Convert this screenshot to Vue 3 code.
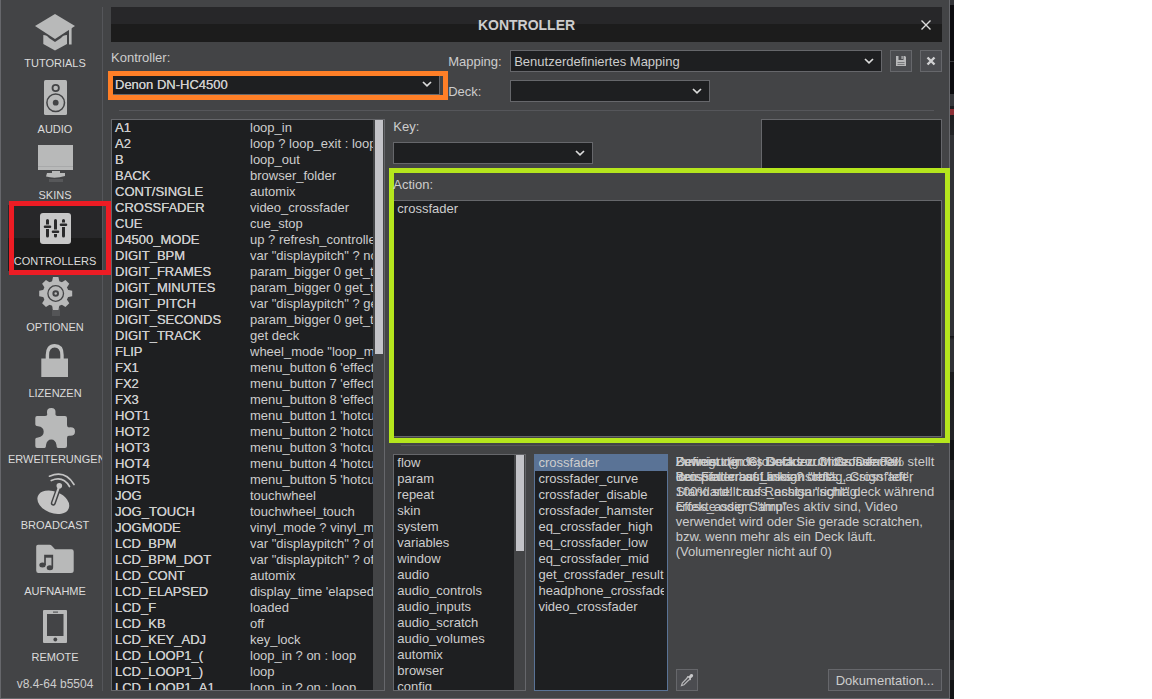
<template>
  <div class="desktop">
    <div class="window">
      <!-- Sidebar -->
      <nav class="sidebar">
        <button
          v-for="item in navItems"
          :key="item.id"
          :class="{ active: activeNav === item.id }"
          class="nav-item"
          @click="activeNav = item.id"
        >
          <svg class="nav-icon" viewBox="0 0 60 49" aria-hidden="true">
            <g v-if="item.id === 'tutorials'">
              <path d="M30 7 50 19 30 32 10 19Z" />
              <path d="M18.3 28 Q22 28 24 31 L30 35 36 31 Q38 28 42 28 V37 L30 43.5 18.3 37Z" />
              <rect x="44" y="21" width="2.6" height="16.5" />
            </g>
            <g v-else-if="item.id === 'audio'">
              <rect x="19" y="7" width="23" height="35" rx="1.5" />
              <circle class="line" cx="30.7" cy="15" r="3.2" stroke-width="1.8" />
              <circle class="line" cx="30.7" cy="29.7" r="8.8" stroke-width="1.5" />
              <circle class="dark" cx="30.7" cy="29.7" r="2.9" />
            </g>
            <g v-else-if="item.id === 'skins'">
              <rect x="13" y="6" width="35" height="25" />
              <rect x="13" y="27" width="35" height="1" fill="#a8a9aa" />
              <path d="M27 32 H35 V34 H40 V37 Q30 40 21 37.5 L22 34 H27Z" />
              <rect x="24" y="40" width="14" height="3" opacity="0.18" />
            </g>
            <g v-else-if="item.id === 'controllers'">
              <rect x="15" y="8" width="31" height="31" rx="3" fill="#c8c8c8" />
              <path class="line" d="M22.5 15.5 V31 M30.5 15.5 V31 M38.5 15.5 V31" stroke-width="3" stroke-linecap="round" />
              <path d="M18.5 21.8 H26.5 M26.5 26.8 H34.5 M34.5 19.8 H42.5" stroke="#c8c8c8" stroke-width="4.6" />
              <path class="line" d="M20 21.8 H25 M28 26.8 H33 M36 19.8 H41" stroke-width="2.6" stroke-linecap="round" />
            </g>
            <g v-else-if="item.id === 'optionen'">
              <rect x="27" y="37" width="8" height="8" opacity="0.15" />
              <circle cx="30.7" cy="22.5" r="12.8" />
              <path
                v-for="n in 8"
                :key="n"
                d="M26.7 12 L28 6 H33.4 L34.7 12Z"
                :transform="`rotate(${n * 45} 30.7 22.5)`"
              />
              <circle class="line" cx="30.7" cy="22.5" r="7.8" stroke-width="1.3" />
              <circle class="line" cx="30.7" cy="22.5" r="2.3" stroke-width="2" />
            </g>
            <g v-else-if="item.id === 'lizenzen'">
              <rect x="16.3" y="21.5" width="26.7" height="18.5" />
              <path d="M22.4 22 V18 Q22.4 8.8 29.7 8.8 Q37 8.8 37 18 V22" fill="none" stroke="#bfc0c0" stroke-width="3.4" />
            </g>
            <g v-else-if="item.id === 'erweiterungen'">
              <path
                d="M12 13 H20 Q23 13 22 10 Q21.5 5 26.3 5 Q31 5 30.5 10 Q30 13 32.5 13 H40 Q42 13 42 15 V22 Q42 25 45 24.3 Q50 24 50 28.5 Q50 33 45 32.8 Q42 32 42 35 V43 Q42 45 40 45 H33 Q31.5 45 31.5 42 Q30.5 36.5 26.3 36.5 Q22 36.5 21 42 Q21 45 19.5 45 H12 Q10.3 45 10.3 43 V36 Q10.3 34.5 13 34.5 Q18.7 33.5 18.7 28.8 Q18.7 24 13 23.3 Q10.3 23.3 10.3 21.5 V15 Q10.3 13 12 13Z"
              />
            </g>
            <g v-else-if="item.id === 'broadcast'">
              <ellipse cx="28.3" cy="33.2" rx="16.6" ry="10.8" transform="rotate(22 28.3 33.2)" fill="#c4c4c4" />
              <path class="line" d="M28.3 34.2 L33.5 19.5" stroke-width="5" stroke-linecap="round" />
              <path d="M28.3 34 L34.3 17" stroke="#c4c4c4" stroke-width="2.2" stroke-linecap="round" />
              <circle cx="34.3" cy="16.7" r="2.8" fill="#c4c4c4" />
              <path d="M24.5 7.2 Q40 0.5 49 15.5 M26.3 11.5 Q38 6.5 44.5 17.5" fill="none" stroke="#c4c4c4" stroke-width="1.7" stroke-linecap="round" />
            </g>
            <g v-else-if="item.id === 'aufnahme'">
              <path d="M13 9.7 H24.5 Q26 9.7 27 11 L30 14.3 H46.5 Q48.7 14.3 48.7 16.5 V35.5 Q48.7 38 46 38 H13.5 Q11.2 38 11.2 35.5 V11.5 Q11.2 9.7 13 9.7Z" />
              <path class="line" d="M20 30 V20.5 H27.3 V32.5" stroke-width="1.7" />
              <path class="line" d="M20 21.5 H27.3" stroke-width="2.4" />
              <ellipse class="dark" cx="17.5" cy="30" rx="3.2" ry="2.5" />
              <ellipse class="dark" cx="24.9" cy="32.7" rx="3.2" ry="2.5" />
            </g>
            <g v-else>
              <rect x="18" y="9" width="24" height="33" rx="1" />
              <rect class="dark" x="22" y="13" width="16.5" height="22" />
              <rect class="dark" x="28" y="10.6" width="5" height="1" />
              <circle class="dark" cx="30.3" cy="38.5" r="1.9" />
            </g>
          </svg>
          <span class="nav-label">{{ item.label }}</span>
          <span v-if="item.id === 'controllers'" class="marker marker-red"></span>
        </button>
        <div class="version">v8.4-64 b5504</div>
      </nav>

      <!-- Main panel -->
      <main class="panel">
        <header class="title-bar">
          <h1 class="title">KONTROLLER</h1>
          <button class="close-button" aria-label="Schließen">
            <svg viewBox="0 0 12 12"><path d="M1.5 1.5 10.5 10.5 M10.5 1.5 1.5 10.5" stroke-width="1.4" /></svg>
          </button>
        </header>

        <section class="selectors">
          <div class="field">
            <label for="controller">Kontroller:</label>
            <div class="combo marked">
              <select id="controller" class="strong">
                <option>Denon DN-HC4500</option>
              </select>
              <svg class="chevron" viewBox="0 0 10 6"><path d="M1 1 5 4.8 9 1" /></svg>
              <span class="marker marker-orange"></span>
            </div>
          </div>
          <div class="mapping">
            <div class="mapping-row">
              <label for="mapping">Mapping:</label>
              <div class="combo grow">
                <select id="mapping">
                  <option>Benutzerdefiniertes Mapping</option>
                </select>
                <svg class="chevron" viewBox="0 0 10 6"><path d="M1 1 5 4.8 9 1" /></svg>
              </div>
              <button class="tool-button" aria-label="Speichern">
                <svg viewBox="0 0 12 12">
                  <path d="M1 1 H3.5 V5 H8.5 V1 H10 L11 2 V11 H1Z M6.5 1 H7.7 V4 H6.5Z" fill="#b8b8ba" />
                  <path d="M2.5 7.5 H9.5 M2.5 9.5 H9.5" stroke="#77787b" stroke-width="1" />
                </svg>
              </button>
              <button class="tool-button" aria-label="Löschen">
                <svg viewBox="0 0 12 12"><path d="M2.5 2.5 9.5 9.5 M9.5 2.5 2.5 9.5" stroke="#d0d0d2" stroke-width="2.4" /></svg>
              </button>
            </div>
            <div class="mapping-row">
              <label for="deck">Deck:</label>
              <div class="combo short">
                <select id="deck"></select>
                <svg class="chevron" viewBox="0 0 10 6"><path d="M1 1 5 4.8 9 1" /></svg>
              </div>
            </div>
          </div>
        </section>

        <hr class="divider" />

        <section class="editor">
          <!-- Key bindings -->
          <div class="list-box">
            <div class="list-view">
              <table class="bindings">
                <tbody>
                  <tr v-for="row in bindings" :key="row[0]">
                    <th scope="row">{{ row[0] }}</th>
                    <td>{{ row[1] }}</td>
                  </tr>
                </tbody>
              </table>
            </div>
            <div class="scroll-track">
              <div class="scroll-thumb" :style="{ height: bindingsThumb + '%' }"></div>
            </div>
          </div>

          <div class="details">
            <div class="key-row">
              <div class="field">
                <label for="key">Key:</label>
                <div class="combo short">
                  <select id="key"></select>
                  <svg class="chevron" viewBox="0 0 10 6"><path d="M1 1 5 4.8 9 1" /></svg>
                </div>
              </div>
              <div class="preview"></div>
            </div>

            <div class="action">
              <span class="marker marker-green"></span>
              <label for="action" class="action-label">Action:</label>
              <textarea id="action" v-model="action" spellcheck="false"></textarea>
            </div>

            <hr class="divider" />

            <div class="browser">
              <div class="list-box">
                <ul class="list-view">
                  <li v-for="name in categories" :key="name">
                    <button class="list-item">{{ name }}</button>
                  </li>
                </ul>
                <div class="scroll-track">
                  <div class="scroll-thumb" :style="{ height: categoriesThumb + '%' }"></div>
                </div>
              </div>

              <div class="list-box focused">
                <ul class="list-view">
                  <li v-for="name in verbs" :key="name">
                    <button
                      :class="{ selected: selectedVerb === name }"
                      class="list-item"
                      @click="selectedVerb = name"
                    >
                      {{ name }}
                    </button>
                  </li>
                </ul>
              </div>

              <div class="help">
                <div class="help-texts">
                  <p v-for="(lines, i) in helpTexts" :key="i" class="help-text">
                    <span v-for="(line, j) in lines" :key="j">{{ line }}</span>
                  </p>
                </div>
                <div class="help-actions">
                  <button class="tool-button" aria-label="Farbe wählen">
                    <svg class="picker" viewBox="0 0 14 14">
                      <path d="M8.3 3.5 6.2 6 2.3 10 1.5 12.5 4 11.7 8 7.8 10.5 5.7" fill="none" stroke="#b8b8ba" stroke-width="1.2" />
                      <path d="M7 3 9 3.3 10.5 1.3 Q12 0.5 13 1.8 Q13.5 3 12.5 4 L10.8 5.3 11 7.5Z" fill="#c8c8ca" />
                    </svg>
                  </button>
                  <button class="doc-button">Dokumentation...</button>
                </div>
              </div>
            </div>
          </div>
        </section>
      </main>
    </div>
    <div class="backdrop"></div>
  </div>
</template>

<script setup>
import { ref } from 'vue'

const activeNav = ref('controllers')
const action = ref('crossfader')
const selectedVerb = ref('crossfader')

const bindingsThumb = 41
const categoriesThumb = 41

const navItems = [
  { id: 'tutorials', label: 'TUTORIALS' },
  { id: 'audio', label: 'AUDIO' },
  { id: 'skins', label: 'SKINS' },
  { id: 'controllers', label: 'CONTROLLERS' },
  { id: 'optionen', label: 'OPTIONEN' },
  { id: 'lizenzen', label: 'LIZENZEN' },
  { id: 'erweiterungen', label: 'ERWEITERUNGEN' },
  { id: 'broadcast', label: 'BROADCAST' },
  { id: 'aufnahme', label: 'AUFNAHME' },
  { id: 'remote', label: 'REMOTE' }
]

const bindings = [
  ['A1', 'loop_in'],
  ['A2', 'loop ? loop_exit : loop'],
  ['B', 'loop_out'],
  ['BACK', 'browser_folder'],
  ['CONT/SINGLE', 'automix'],
  ['CROSSFADER', 'video_crossfader'],
  ['CUE', 'cue_stop'],
  ['D4500_MODE', 'up ? refresh_controller'],
  ['DIGIT_BPM', 'var "displaypitch" ? nothing'],
  ['DIGIT_FRAMES', 'param_bigger 0 get_time'],
  ['DIGIT_MINUTES', 'param_bigger 0 get_time'],
  ['DIGIT_PITCH', 'var "displaypitch" ? get_pitch'],
  ['DIGIT_SECONDS', 'param_bigger 0 get_time'],
  ['DIGIT_TRACK', 'get deck'],
  ['FLIP', 'wheel_mode "loop_move"'],
  ['FX1', "menu_button 6 'effect'"],
  ['FX2', "menu_button 7 'effect'"],
  ['FX3', "menu_button 8 'effect'"],
  ['HOT1', "menu_button 1 'hotcue'"],
  ['HOT2', "menu_button 2 'hotcue'"],
  ['HOT3', "menu_button 3 'hotcue'"],
  ['HOT4', "menu_button 4 'hotcue'"],
  ['HOT5', "menu_button 5 'hotcue'"],
  ['JOG', 'touchwheel'],
  ['JOG_TOUCH', 'touchwheel_touch'],
  ['JOGMODE', 'vinyl_mode ? vinyl_mode'],
  ['LCD_BPM', 'var "displaypitch" ? off'],
  ['LCD_BPM_DOT', 'var "displaypitch" ? off'],
  ['LCD_CONT', 'automix'],
  ['LCD_ELAPSED', "display_time 'elapsed'"],
  ['LCD_F', 'loaded'],
  ['LCD_KB', 'off'],
  ['LCD_KEY_ADJ', 'key_lock'],
  ['LCD_LOOP1_(', 'loop_in ? on : loop'],
  ['LCD_LOOP1_)', 'loop'],
  ['LCD_LOOP1_A1', 'loop_in ? on : loop']
]

const categories = [
  'flow',
  'param',
  'repeat',
  'skin',
  'system',
  'variables',
  'window',
  'audio',
  'audio_controls',
  'audio_inputs',
  'audio_scratch',
  'audio_volumes',
  'automix',
  'browser',
  'config'
]

const verbs = [
  'crossfader',
  'crossfader_curve',
  'crossfader_disable',
  'crossfader_hamster',
  'eq_crossfader_high',
  'eq_crossfader_low',
  'eq_crossfader_mid',
  'get_crossfader_result',
  'headphone_crossfader',
  'video_crossfader'
]

// The help pane stacks the texts of several verbs on top of each other
const helpTexts = [
  [
    'Definiert (in %) Deck zur Mitte. Der Fall',
    "'crossfader' auf links ? cross_assign 'left',",
    'Standard: cross_assign "right" deck während',
    'Effekte oder Samples aktiv sind, Video',
    'verwendet wird oder Sie gerade scratchen,',
    'bzw. wenn mehr als ein Deck läuft.',
    '(Volumenregler nicht auf 0)'
  ],
  [
    'Zuweisung des Decks zum Crossfader.',
    'Beispiel: cross_assign "left"',
    '',
    'cross_assign "thru"'
  ],
  [
    'Bewegt den Crossfader. Crossfader 0% stellt',
    'den Fader auf Linksanschlag, Crossfader',
    '100% stellt auf Rechtsanschlag.'
  ]
]
</script>

<style>
body {
  background: #fff;
}
</style>

<style scoped>
.desktop {
  display: flex;
  height: 100vh;
  min-height: 640px;
  padding-right: 198px;
  box-sizing: border-box;
  overflow: hidden;
  font-family: "Liberation Sans", Arial, sans-serif;
  font-size: 13px;
  line-height: 15px;
  color: #cdcdcd;
}

.desktop * {
  box-sizing: border-box;
}

.desktop button,
.desktop select,
.desktop textarea {
  margin: 0;
  font: inherit;
  color: inherit;
}

.window {
  flex: 1;
  min-width: 0;
  display: flex;
  gap: 8px;
  padding: 7px;
  border: 1px solid #66676b;
  border-top: 0;
  background: #434446;
}

.backdrop {
  flex: 0 0 4px;
  background:
    linear-gradient(#333438 5px, transparent 5px),
    linear-gradient(transparent 61px, #37383c 61px, #37383c 62px, transparent 62px),
    linear-gradient(transparent 109px, #8d2f36 109px, #8d2f36 115px, transparent 115px),
    linear-gradient(#0c0c0f 94px, #36373b 94px, #36373b 106px, #1b1c1e 106px, #222326 135px, #303135 135px, #303135 336px, #111214 336px, #303135 340px, #303135 372px, #1b1c1e 372px, #222326 433px, transparent 433px),
    repeating-linear-gradient(#111214 0, #111214 20px, #222326 20px, #222326 40px);
}

/* Sidebar */
.sidebar {
  flex: 0 0 95px;
  min-width: 0;
  display: flex;
  flex-direction: column;
  border-right: 1px solid #55565a;
}

.nav-item {
  position: relative;
  display: block;
  flex: 0 0 66px;
  width: 100%;
  padding: 0;
  border: 0;
  background: none;
  cursor: pointer;
}

.nav-item.active {
  background: linear-gradient(#272729 50%, #1c1c1c 50%);
}

.nav-icon {
  display: block;
  width: 60px;
  height: 49px;
  margin-left: 17px;
  fill: #b8b9b9;
}

.nav-icon .dark {
  fill: #434446;
}

.nav-icon .line {
  fill: none;
  stroke: #434446;
}

.nav-item.active .line {
  stroke: #2a2a2b;
}

.desktop .nav-label {
  display: block;
  height: 17px;
  overflow: hidden;
  font-size: 11px;
  line-height: 14px;
  text-align: center;
  white-space: nowrap;
  color: #dcdcdc;
}

.version {
  margin-top: auto;
  font-size: 12px;
  line-height: 14px;
  text-align: center;
}

/* Coloured frames laid over the controls */
.marker {
  position: absolute;
  border: 5px solid;
  pointer-events: none;
}

.marker-red {
  inset: -4px -9px -4px 1px;
  border-color: #ed1c24;
  z-index: 1;
}

.marker-orange {
  inset: -2px -8px -5px -3px;
  border-color: #ff7f27;
}

.marker-green {
  inset: -9px -8px -6px -4px;
  border-color: #b5e61d;
}

/* Main panel */
.panel {
  flex: 1;
  min-width: 0;
  display: flex;
  flex-direction: column;
}

.title-bar {
  display: grid;
  grid-template-columns: 32px 1fr 32px;
  align-items: center;
  flex: 0 0 35px;
  background: linear-gradient(#272729 50%, #1c1c1c 50%);
}

.title {
  grid-column: 2;
  margin: 0;
  font-size: 14px;
  line-height: 16px;
  font-weight: bold;
  text-align: center;
}

.close-button {
  padding: 0;
  border: 0;
  background: none;
}

.close-button svg {
  display: block;
  width: 12px;
  height: 12px;
  margin: 0 auto;
  stroke: #dcdcdc;
}

.selectors {
  display: grid;
  grid-template-columns: 2fr 3fr;
  gap: 8px;
  padding-top: 8px;
}

.field,
.mapping {
  display: flex;
  flex-direction: column;
  gap: 8px;
}

.mapping-row {
  display: flex;
  align-items: center;
  gap: 8px;
}

.mapping-row label {
  flex: 0 0 54px;
}

.combo {
  display: grid;
  grid-template-columns: 1fr 18px;
  align-items: center;
  height: 22px;
}

.combo.marked {
  position: relative;
}

.combo.grow {
  flex: 1;
}

.combo.short {
  width: 200px;
}

.combo select {
  grid-area: 1 / 1 / 2 / 3;
  width: 100%;
  height: 22px;
  padding: 0 20px 0 3px;
  border: 1px solid #66676b;
  border-radius: 0;
  background: #1e1f21;
  appearance: none;
}

.chevron {
  grid-area: 1 / 2;
  width: 10px;
  height: 6px;
  fill: none;
  stroke: #dcdcdc;
  stroke-width: 1.7;
  pointer-events: none;
}

.strong,
.bindings th {
  text-shadow: 0 0 0 #cdcdcd;
}

.tool-button {
  flex: 0 0 22px;
  display: flex;
  align-items: center;
  justify-content: center;
  height: 22px;
  padding: 0;
  border: 1px solid #66676b;
  background: #4b4c50;
}

.tool-button svg {
  width: 12px;
  height: 12px;
}

.tool-button .picker {
  width: 14px;
  height: 14px;
}

.divider {
  flex: 0 0 1px;
  width: auto;
  height: 1px;
  margin: 8px;
  border: 0;
  background: #55565a;
}

.editor {
  flex: 1;
  min-height: 0;
  display: grid;
  grid-template-columns: 1fr 2fr;
  grid-template-rows: 100%;
  gap: 8px;
}

.list-box {
  display: flex;
  min-width: 0;
  min-height: 0;
  overflow: hidden;
  border: 1px solid #66676b;
  background: #1e1f21;
}

.list-box.focused {
  border-color: #5a7396;
}

.list-view {
  flex: 1;
  min-width: 0;
  margin: 0;
  padding: 0;
  overflow: hidden;
  list-style: none;
}

.scroll-track {
  flex: 0 0 11px;
  padding: 0 1px 0 2px;
  background: #434446;
}

.scroll-thumb {
  background: #c3c3c8;
}

.bindings {
  width: 100%;
  table-layout: fixed;
  border-collapse: collapse;
}

.bindings th,
.bindings td {
  height: 16px;
  padding: 0;
  overflow: hidden;
  line-height: 16px;
  font-weight: normal;
  text-align: left;
  white-space: nowrap;
}

.bindings th {
  width: 138px;
  padding-left: 3px;
}

.details {
  display: flex;
  flex-direction: column;
  min-width: 0;
  min-height: 0;
}

.key-row {
  display: flex;
  justify-content: space-between;
  height: 50px;
  margin-bottom: 8px;
}

.preview {
  flex: 0 0 33%;
  border: 1px solid #66676b;
  background: #1e1f21;
}

.action {
  position: relative;
  flex: 1 1 23px;
  min-height: 0;
  display: flex;
  flex-direction: column;
  gap: 8px;
}

.action-label {
  position: relative;
}

.action textarea {
  flex: 1;
  width: 100%;
  padding: 0 3px;
  border: 1px solid #66676b;
  border-radius: 0;
  background: #1e1f21;
  line-height: 16px;
  resize: none;
}

.browser {
  flex: 1 1 0;
  min-height: 0;
  display: grid;
  grid-template-columns: 1fr 1fr 2fr;
  grid-template-rows: 100%;
  gap: 8px;
}

.list-item {
  display: block;
  width: 100%;
  padding: 0 3px;
  border: 0;
  background: none;
  overflow: clip;
  overflow-clip-margin: content-box;
  text-align: left;
  white-space: nowrap;
}

.desktop .list-item {
  line-height: 16px;
}

.list-item.selected {
  background: #5a7396;
}

.help {
  display: flex;
  flex-direction: column;
  justify-content: space-between;
  min-width: 0;
}

.help-texts {
  display: grid;
}

.help-text {
  grid-area: 1 / 1;
  margin: 0;
}

.help-text span {
  display: block;
  height: 15px;
  white-space: nowrap;
}

.help-actions {
  display: flex;
  justify-content: space-between;
}

.doc-button {
  height: 22px;
  padding: 0 7px;
  border: 1px solid #66676b;
  background: #4b4c50;
}
</style>
